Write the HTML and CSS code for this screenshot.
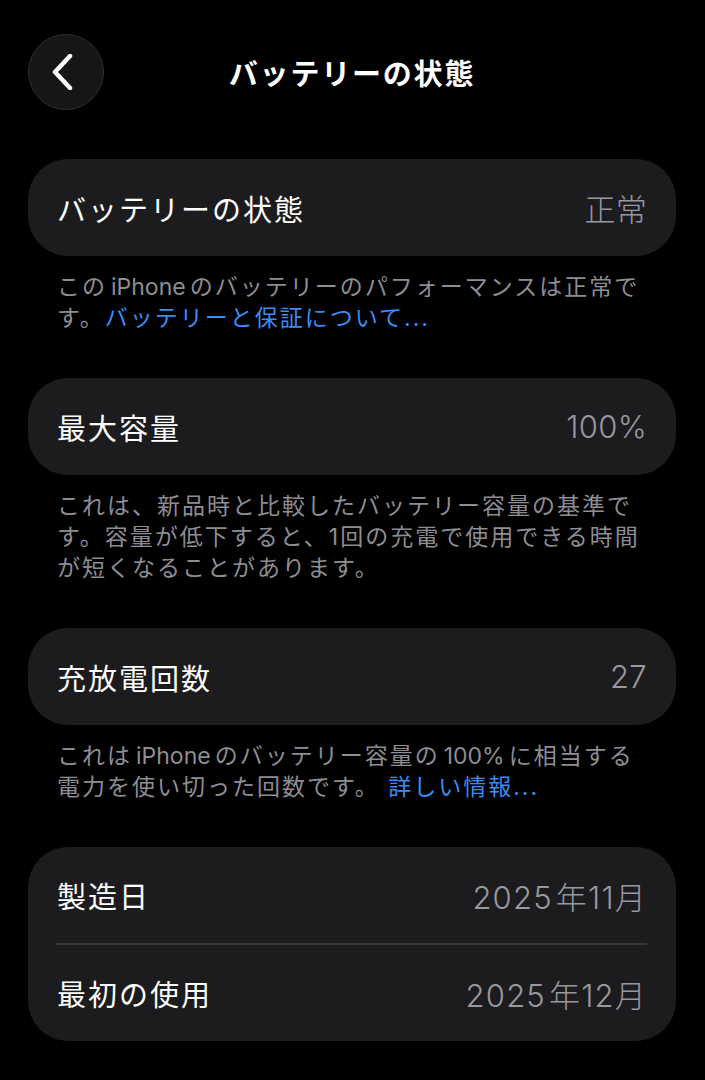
FILE: index.html
```html
<!DOCTYPE html>
<html lang="ja">

<head>
    <meta charset="UTF-8">
    <meta name="viewport" content="width=device-width, initial-scale=1.0">
    <title>バッテリーの状態</title>
    <link rel="stylesheet" href="styles.css">
</head>

<body>
    <div class="page">
        <header class="nav">
            <button class="back-button" aria-label="戻る">
                <svg width="22" height="36" viewBox="0 0 22 36">
                    <path d="M18 2 L3 18 L18 34" fill="none" stroke="#fff" stroke-width="4.5"
                        stroke-linecap="round" stroke-linejoin="round" />
                </svg>
            </button>
            <h1 class="nav-title">バッテリーの状態</h1>
            <div></div>
        </header>

        <section class="group first">
            <div class="card">
                <div class="row">
                    <span class="label">バッテリーの状態</span>
                    <span class="value">正常</span>
                </div>
            </div>
            <p class="footer">この<span class="latin">iPhone</span>のバッテリーのパフォーマンスは正常で<br>す。<a href="#" class="link">バッテリーと保証について...</a></p>
        </section>

        <section class="group">
            <div class="card">
                <div class="row">
                    <span class="label">最大容量</span>
                    <span class="value">100%</span>
                </div>
            </div>
            <p class="footer">これは、新品時と比較したバッテリー容量の基準で<br>す。容量が低下すると、1回の充電で使用できる時間<br>が短くなることがあります。</p>
        </section>

        <section class="group">
            <div class="card">
                <div class="row">
                    <span class="label">充放電回数</span>
                    <span class="value">27</span>
                </div>
            </div>
            <p class="footer">これは<span class="latin">iPhone</span>のバッテリー容量の<span class="latin">100%</span>に相当する<br>電力を使い切った回数です。 <a href="#" class="link">詳しい情報...</a></p>
        </section>

        <section class="group">
            <div class="card">
                <div class="row">
                    <span class="label">製造日</span>
                    <span class="value date"><span class="year">2025</span>年11月</span>
                </div>
                <div class="separator"></div>
                <div class="row">
                    <span class="label">最初の使用</span>
                    <span class="value date"><span class="year">2025</span>年12月</span>
                </div>
            </div>
        </section>
    </div>
</body>

</html>
```

FILE: styles.css
```css
body {
    margin: 0;
    background-color: #000;
    color: #fff;
    font-family: Inter, "Noto Sans CJK JP", sans-serif;
}

.page {
    padding: 34px 29px 0 28px;
}

.nav {
    display: grid;
    grid-template-columns: 76px 1fr 76px;
    align-items: center;
    height: 76px;
}

.back-button {
    width: 76px;
    height: 76px;
    padding: 0 6px 0 0;
    border: 1px solid #2e2e30;
    border-radius: 50%;
    background-color: #161617;
    display: flex;
    align-items: center;
    justify-content: center;
}

.nav-title {
    margin: 0;
    text-align: center;
    font-size: 29px;
    font-weight: 700;
    letter-spacing: 1.8px;
}

.group {
    margin-top: 44px;
}

.group.first {
    margin-top: 49px;
}

.card {
    background-color: #1c1c1e;
    border-radius: 40px;
}

.row {
    height: 96px;
    padding: 0 29px;
    display: flex;
    align-items: center;
    justify-content: space-between;
}

.card > .row:only-child {
    height: 97px;
}

.label {
    font-size: 29px;
    letter-spacing: 2px;
}

.value {
    font-size: 31px;
    font-weight: 300;
    color: #98989e;
    letter-spacing: 0.3px;
}

.value.date {
    letter-spacing: 1.2px;
}

.year {
    margin-right: 3px;
}

.separator {
    height: 2px;
    margin: 0 29px 0 28px;
    background-color: #38383a;
}

.footer {
    margin: 16px 0 0;
    padding: 0 10px 0 29px;
    font-size: 23px;
    line-height: 31px;
    letter-spacing: 2px;
    color: #8d8d93;
}

.latin {
    letter-spacing: 0;
    margin: 0 4px;
}

.link {
    color: #3a8cf0;
    text-decoration: none;
}
```
